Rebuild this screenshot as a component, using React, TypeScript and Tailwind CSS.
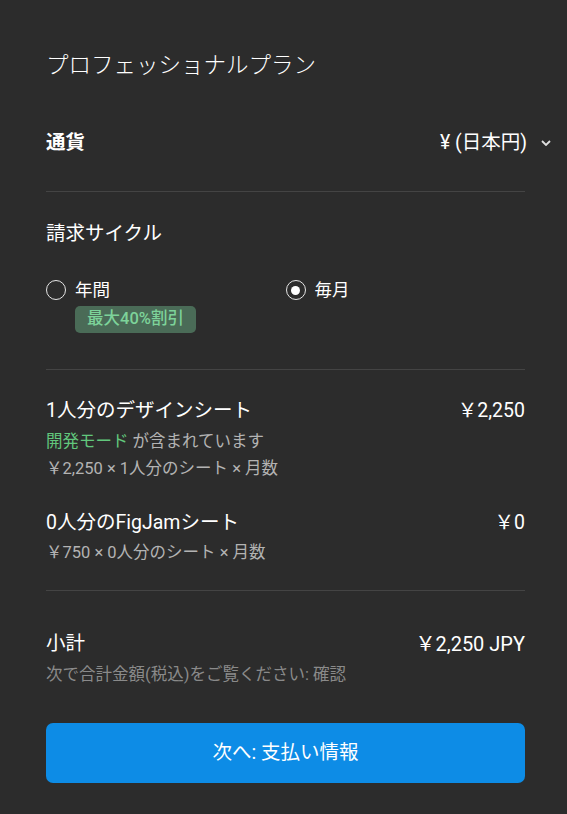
function Radio({ checked, label }: { checked?: boolean; label: string }) {
  return (
    <label className="flex items-center gap-[9px] h-6">
      <span className="w-5 h-5 rounded-full border-[1.5px] border-[#e6e6e6] flex items-center justify-center">
        {checked && <span className="w-[9px] h-[9px] rounded-full bg-white" />}
      </span>
      <span className="text-[17.5px] text-white">{label}</span>
    </label>
  )
}

export default function App() {
  return (
    <div
      className="min-h-[814px] w-full bg-[#2c2c2c] text-white pl-[46px] pr-[42px] pt-[51px]"
      style={{ fontFamily: "Roboto, 'Noto Sans CJK JP', sans-serif" }}
    >
      {/* header */}
      <h1 className="text-[22.5px] leading-[28px] font-light">プロフェッショナルプラン</h1>

      <div className="mt-[52px] flex items-center justify-between h-6">
        <span className="text-[19.5px] font-bold">通貨</span>
        <div className="flex items-center gap-[14px] -mr-[26px]">
          <span className="text-[19.5px]">¥ (日本円)</span>
          <svg width="10" height="6" viewBox="0 0 10 6" fill="none" className="text-[#e0e0e0]">
            <path d="M1 1l4 4 4-4" stroke="currentColor" strokeWidth="1.8" />
          </svg>
        </div>
      </div>

      <div className="mt-[36px] h-px bg-[#444444]" />

      {/* billing cycle */}
      <h2 className="mt-[29px] text-[19.5px] leading-[26px]">請求サイクル</h2>
      <div className="mt-[31px] grid grid-cols-2">
        <div>
          <Radio label="年間" />
          <div className="mt-[4px] ml-[29px] inline-flex items-center h-[27px] px-[12px] rounded-[5px] bg-[#4a6b57] text-[#7dd39a] text-[16.5px] font-medium">
            最大40%割引
          </div>
        </div>
        <div>
          <Radio checked label="毎月" />
        </div>
      </div>

      <div className="mt-[36px] h-px bg-[#444444]" />

      {/* seats */}
      <div className="mt-[29px] flex justify-between text-[19.5px] leading-6">
        <span>1人分のデザインシート</span>
        <span>￥2,250</span>
      </div>
      <p className="mt-[8px] text-[16.5px] leading-[22px] text-[#b3b3b3]">
        <span className="text-[#62c77c]">開発モード</span> が含まれています
      </p>
      <p className="mt-[5px] text-[16.5px] leading-[22px] text-[#b3b3b3]">￥2,250 × 1人分のシート × 月数</p>

      <div className="mt-[31px] flex justify-between text-[19.5px] leading-6">
        <span>0人分のFigJamシート</span>
        <span>￥0</span>
      </div>
      <p className="mt-[7px] text-[16.5px] leading-[22px] text-[#b3b3b3]">￥750 × 0人分のシート × 月数</p>

      <div className="mt-[26px] h-px bg-[#444444]" />

      {/* subtotal */}
      <div className="mt-[41px] flex justify-between leading-6">
        <span className="text-[19.5px]">小計</span>
        <span className="text-[20px]">￥2,250 JPY</span>
      </div>
      <p className="mt-[8px] text-[16.5px] leading-[22px] text-[#8a8a8a]">次で合計金額(税込)をご覧ください: 確認</p>

      <button className="mt-[37px] w-full h-[60px] rounded-[7px] bg-[#0d8ce6] text-white text-[19.5px]">
        次へ: 支払い情報
      </button>
    </div>
  )
}
